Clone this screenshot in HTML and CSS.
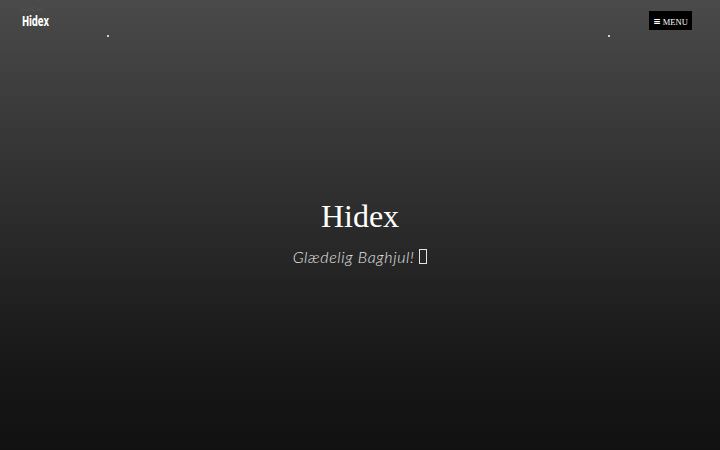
FILE: index.html
```html
<!DOCTYPE html>
<html>
<head>
<meta charset="utf-8">
<link rel="stylesheet" href="styles.css">
</head>
<body>
<div class="page">
  <header class="topbar">
    <div class="brand">
      <span class="tagline">ILoCon</span>
      <a class="logo" href="#">Hidex</a>
    </div>
    <button class="menu-btn"><span class="burger">&#8801;</span><span class="menu-label">MENU</span></button>
  </header>
  <span class="dot dot-left"></span>
  <span class="dot dot-right"></span>
  <main class="hero">
    <h1 class="title">Hidex</h1>
    <p class="subtitle">Glædelig Baghjul! <span class="tofu"></span></p>
  </main>
</div>
</body>
</html>
```
FILE: styles.css
```css
html, body {
  margin: 0;
  padding: 0;
  height: 100%;
}
body {
  background: linear-gradient(to bottom, #4a4a4a 0%, #2e2e2e 45%, #181818 80%, #111111 100%);
  color: #fff;
  font-family: "Liberation Sans", sans-serif;
  overflow: hidden;
}
.page {
  position: relative;
  height: 450px;
  display: flex;
  flex-direction: column;
}
.topbar {
  display: flex;
  justify-content: space-between;
  align-items: flex-start;
  padding: 11px 28px 0 22px;
  height: 30px;
}
.brand {
  position: relative;
  padding-top: 1px;
}
.tagline {
  position: absolute;
  left: 0;
  top: -5px;
  font-size: 6px;
  color: #555;
  letter-spacing: 0.5px;
}
.logo {
  font-family: "DejaVu Sans Condensed", "DejaVu Sans", sans-serif;
  font-weight: bold;
  font-size: 13px;
  color: #fff;
  text-decoration: none;
  letter-spacing: -0.3px;
  transform: scale(0.74, 1.1);
  display: inline-block;
  transform-origin: left center;
}
.menu-btn {
  background: #000;
  color: #fff;
  border: none;
  height: 19px;
  width: 43px;
  padding: 2px 0 0 0;
  font-family: "Liberation Serif", serif;
  font-size: 8.5px;
  display: flex;
  align-items: center;
  justify-content: center;
  gap: 2px;
}
.burger {
  font-family: "DejaVu Sans", sans-serif;
  font-size: 9px;
  font-weight: bold;
  margin-top: -1px;
}
.dot {
  position: absolute;
  top: 35px;
  width: 2px;
  height: 2px;
  background: #cfcfcf;
}
.dot-left { left: 107px; }
.dot-right { left: 608px; }
.hero {
  flex: 1;
  display: flex;
  flex-direction: column;
  align-items: center;
  padding-top: 155px;
}
.title {
  margin: 0;
  font-family: "Liberation Serif", serif;
  font-weight: normal;
  font-size: 32px;
  line-height: 40px;
  color: #fff;
}
.subtitle {
  margin: 11px 0 0 0;
  font-family: "Lato", sans-serif;
  font-style: italic;
  font-weight: 300;
  font-size: 16px;
  color: #e4e4e4;
  letter-spacing: 0.6px;
  display: flex;
  align-items: center;
}
.tofu {
  display: inline-block;
  width: 6px;
  height: 13px;
  border: 1px solid #e4e4e4;
  margin-left: 5px;
}
```
